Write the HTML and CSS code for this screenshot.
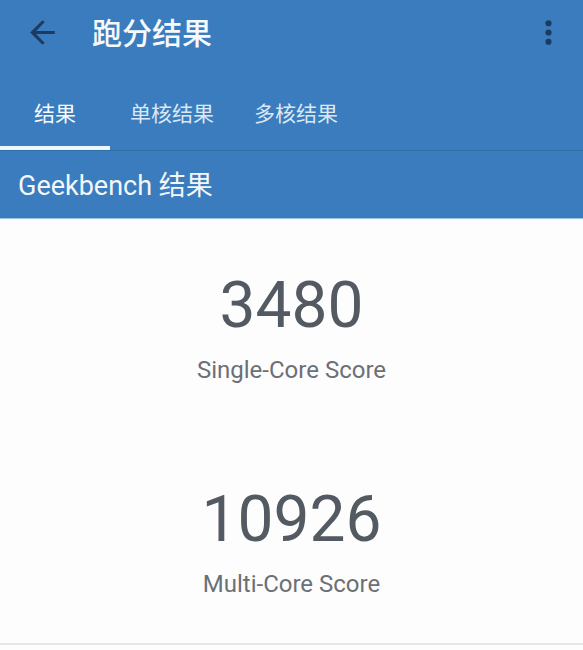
FILE: index.html
```html
<!DOCTYPE html>
<html lang="zh-CN">
<head>
<meta charset="utf-8">
<title>跑分结果</title>
<link rel="stylesheet" href="styles.css">
</head>
<body>
<div class="app">
  <header class="appbar">
    <div class="toolbar">
      <svg class="icon back" viewBox="0 0 24 24"><path d="M20 11H7.83l5.59-5.59L12 4l-8 8 8 8 1.41-1.41L7.83 13H20v-2z"/></svg>
      <h1 class="title">跑分结果</h1>
      <svg class="icon menu" viewBox="0 0 24 24"><circle cx="12" cy="6" r="2"/><circle cx="12" cy="12" r="2"/><circle cx="12" cy="18" r="2"/></svg>
    </div>
    <nav class="tabs">
      <div class="tab active">结果</div>
      <div class="tab">单核结果</div>
      <div class="tab">多核结果</div>
    </nav>
    <div class="section-title">Geekbench 结果</div>
  </header>
  <main class="content">
    <div class="score-block">
      <div class="score">3480</div>
      <div class="label">Single-Core Score</div>
    </div>
    <div class="score-block">
      <div class="score">10926</div>
      <div class="label">Multi-Core Score</div>
    </div>
  </main>
</div>
</body>
</html>
```
FILE: styles.css
```css
html, body {
  margin: 0;
  padding: 0;
  background: #fdfdfd;
}
body {
  font-family: Roboto, "Noto Sans CJK SC", sans-serif;
  width: 583px;
  height: 650px;
  overflow: hidden;
}
.appbar {
  background: #3a7cbd;
  color: #f3f8fb;
}
.toolbar {
  height: 72px;
  box-sizing: border-box;
  padding-top: 14px;
  display: flex;
  align-items: flex-start;
}
.icon {
  width: 37px;
  height: 37px;
  fill: #1d3b5f;
  flex: none;
}
.back {
  margin-left: 24px;
}
.title {
  margin: 0 0 0 31px;
  font-size: 30px;
  line-height: 40px;
  font-weight: 500;
  color: #f5f9fb;
}
.menu {
  margin-left: auto;
  margin-right: 16px;
}
.tabs {
  display: flex;
  height: 79px;
  border-bottom: 1px solid #336ea8;
  box-sizing: border-box;
}
.tab {
  box-sizing: border-box;
  height: 78px;
  padding: 6px 20px 0;
  display: flex;
  align-items: center;
  justify-content: center;
  font-size: 21px;
  color: #dbe8f3;
  border-bottom: 4px solid transparent;
}
.tab.active {
  min-width: 110px;
  color: #f7fafc;
  border-bottom-color: #eaf6fb;
}
.section-title {
  height: 68px;
  box-sizing: border-box;
  padding-left: 18px;
  padding-bottom: 3px;
  display: flex;
  align-items: center;
  font-size: 27px;
  color: #f2f7fa;
  border-bottom: 1px solid #9cc6e2;
}
.content {
  padding-top: 49px;
  height: 375px;
  border-bottom: 2px solid #e6e6e6;
  display: flex;
  flex-direction: column;
  align-items: center;
  gap: 98px;
}
.score-block {
  display: flex;
  flex-direction: column;
  align-items: center;
  gap: 13px;
}
.score {
  font-size: 64px;
  line-height: 75px;
  color: #535a62;
}
.label {
  font-size: 24px;
  line-height: 28px;
  color: #6b7076;
}
```
